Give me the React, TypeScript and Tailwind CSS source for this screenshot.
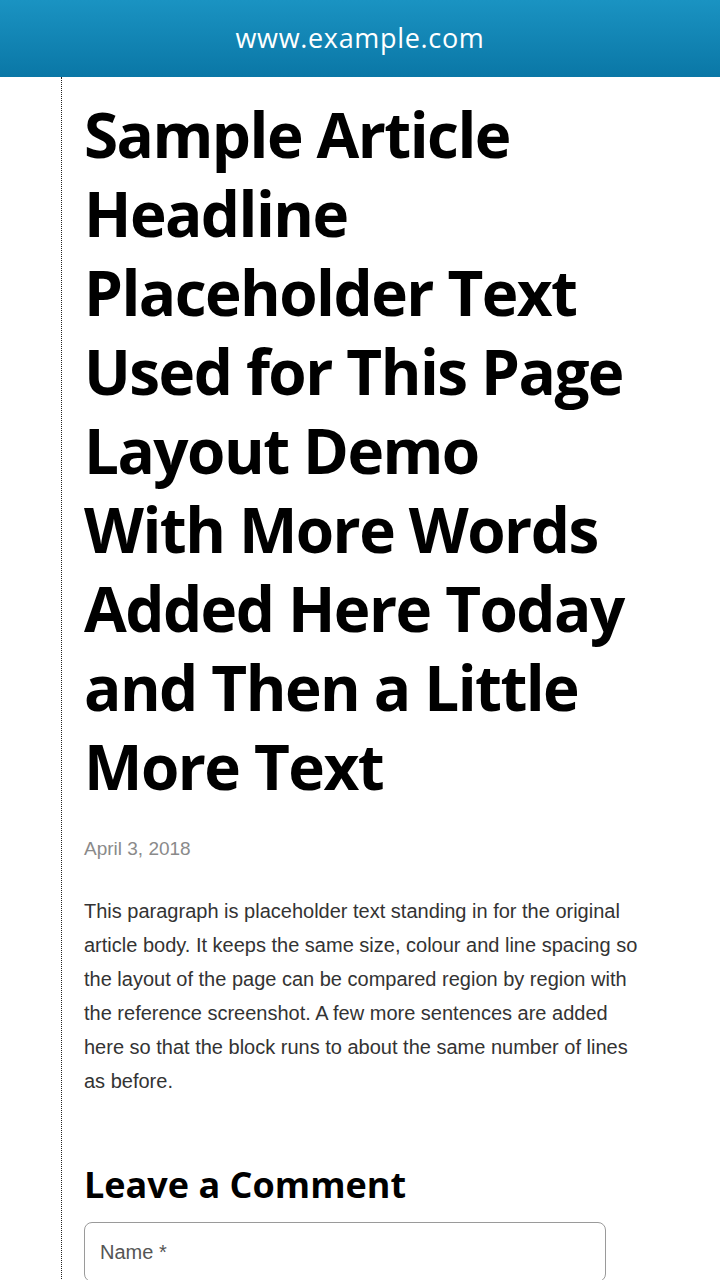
import React from "react";

const App = () => {
  return (
    <div className="w-[720px] h-[1280px] overflow-hidden bg-white font-['Liberation_Sans',Arial,sans-serif]">
      <header className="h-[77px] flex items-center justify-center bg-gradient-to-b from-[#1a93c2] to-[#0a77a6]">
        <span className="text-white text-[27px] tracking-wide font-['Open_Sans',sans-serif]">www.example.com</span>
      </header>
      <div className="flex h-full">
        <div className="w-[62px] shrink-0 border-r border-dotted border-[#222]" />
        <main className="pl-[22px] pr-[80px] pt-[18px]">
          <h1 className="max-w-[540px] font-['Open_Sans',sans-serif] font-bold text-[62px] leading-[79px] text-black tracking-tight">
            Sample Article Headline Placeholder Text Used for This Page Layout Demo With More Words Added Here Today and
            Then a Little More Text
          </h1>
          <p className="mt-[29px] text-[19px] text-[#8a8a8a]">April 3, 2018</p>
          <p className="mt-[30px] text-[20px] leading-[34px] text-[#333]">
            This paragraph is placeholder text standing in for the original article body. It keeps the same size,
            colour and line spacing so the layout of the page can be compared region by region with the reference
            screenshot. A few more sentences are added here so that the block runs to about the same number of lines
            as before.
          </p>
          <h2 className="mt-[60px] font-['Open_Sans',sans-serif] font-bold text-[36px] text-black">Leave a Comment</h2>
          <div className="mt-[10px] w-[522px] h-[60px] rounded-[8px] border border-[#9a9a9a] flex items-center px-[15px]">
            <span className="text-[20px] text-[#555]">Name *</span>
          </div>
        </main>
      </div>
    </div>
  );
};

export default App;
